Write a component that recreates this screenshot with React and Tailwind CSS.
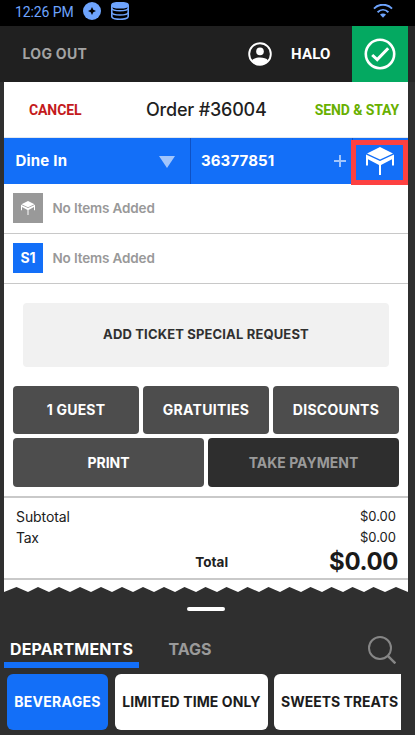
const TableIcon = ({className}) => (
  <svg className={className} viewBox="0 0 28 28" fill="none">
    <path d="M14 0 L27 6.4 L14 12.4 L1 6.4 Z" fill="currentColor" />
    <path d="M0 7.4 L14 14 L28 7.4 V18.6 H26 V12.2 L15 18 V28 H13 V18 L2 12.2 V18.6 H0 Z" fill="currentColor" />
  </svg>
)

const StatusBar = () => (
  <div className="h-[26px] bg-black flex items-start justify-between pl-[15px] pr-[22px] text-[#6ea4fd]">
    <div className="flex items-center h-[23px]">
      <span className="w-[68px] font-['Roboto',sans-serif] text-sm leading-none tracking-[-0.1px] whitespace-nowrap">12:26 PM</span>
      <svg className="w-[18px] h-[18px] -mt-px" viewBox="0 0 18 18">
        <circle cx="9" cy="9" r="9" fill="currentColor" />
        <path d="M9 5 L10.3 7.7 L13 9 L10.3 10.3 L9 13 L7.7 10.3 L5 9 L7.7 7.7 Z" fill="#000" />
      </svg>
      <svg className="w-[18px] h-[18px] ml-[10px] -mt-px" viewBox="0 0 18 18" fill="none" stroke="currentColor" strokeWidth="1.6">
        <ellipse cx="9" cy="3.2" rx="8.2" ry="2.6" fill="currentColor" />
        <path d="M0.8 3.2 V14.6 C0.8 18.2 17.2 18.2 17.2 14.6 V3.2" />
        <path d="M0.8 6.4 C1.6 9.6 16.4 9.6 17.2 6.4" />
        <path d="M0.8 10.6 C1.6 13.8 16.4 13.8 17.2 10.6" />
      </svg>
    </div>
    <svg className="w-[20px] h-[14px] mt-[4px]" viewBox="0 0 20 14" fill="none" stroke="currentColor" strokeWidth="1.9">
      <path d="M1 4.6 C6 -0.6 14 -0.6 19 4.6" />
      <path d="M4.6 8.2 C7.8 5.1 12.2 5.1 15.4 8.2" />
      <path d="M7 10.6 C8.6 9.2 11.4 9.2 13 10.6 L10 13.8 Z" fill="currentColor" stroke="none" />
    </svg>
  </div>
)

const Header = () => (
  <div className="h-[56px] flex items-center bg-[#202020]">
    <span className="pl-[22.5px] text-sm font-bold tracking-[0.3px] text-[#a3a3a3]">LOG OUT</span>
    <svg className="w-6 h-6 ml-auto text-white" viewBox="0 0 24 24">
      <circle cx="12" cy="12" r="10.8" fill="none" stroke="currentColor" strokeWidth="1.9" />
      <circle cx="12" cy="9.4" r="3.8" fill="currentColor" />
      <path d="M4 18.4 C6.4 14.6 17.6 14.6 20 18.4 C16.5 23.6 7.5 23.6 4 18.4 Z" fill="currentColor" />
    </svg>
    <span className="w-[61px] ml-[19px] mt-px font-['Roboto',sans-serif] text-[15px] font-bold tracking-[0.2px] text-white">HALO</span>
    <div className="w-[56px] h-full bg-[#04a961] flex items-center justify-center">
      <svg className="w-8 h-8 text-white" viewBox="0 0 32 32" fill="none" stroke="currentColor">
        <circle cx="16" cy="16" r="14.2" strokeWidth="2.6" />
        <path d="M8.2 17 L13.2 21.6 L24.2 10.2" strokeWidth="3" />
      </svg>
    </div>
    <div className="w-[7px] h-full bg-[#262626]" />
  </div>
)

const ItemRow = ({tile, tileClass}) => (
  <div className="h-[50px] border-b border-[#c8c8c8] flex items-center pl-[9px]">
    <div className={`w-[30px] h-[30px] -mt-px flex items-center justify-center text-white text-sm font-bold ${tileClass}`}>{tile}</div>
    <span className="pl-[9.5px] text-[13.5px] font-semibold tracking-[-0.15px] text-[#999]">No Items Added</span>
  </div>
)

const Action = ({className, children}) => (
  <button className={`rounded text-sm font-bold whitespace-nowrap ${className}`}>{children}</button>
)

const Totals = () => (
  <div className="h-[84px] border-y-2 border-[#c9c9c9] px-3 pt-2 text-[#202020]">
    <div className="h-[21px] flex items-center justify-between">
      <span className="text-sm tracking-[-0.1px]">Subtotal</span>
      <span className="text-[13px]">$0.00</span>
    </div>
    <div className="h-[21px] flex items-center justify-between">
      <span className="text-sm tracking-[-0.3px]">Tax</span>
      <span className="text-[13px]">$0.00</span>
    </div>
    <div className="h-[29px] flex items-center justify-end -mr-[2px]">
      <span className="text-[13.5px] font-bold mr-[101px]">Total</span>
      <span className="text-[24px] font-bold tracking-[-0.4px] leading-none -mt-px text-[#1a1a1a]">$0.00</span>
    </div>
  </div>
)

const TornEdge = () => (
  <svg className="block w-full h-[12px]" viewBox="0 0 404 12">
    <rect width="404" height="12" fill="#2f2f2f" />
    <path
      d="M0 0 H404 V12 L392 7 L381 12 L369.5 7 L360 12 L348.5 7 L339 12 L327.5 7 L318 12 L306.5 7 L297 12 L285.5 7 L276 12 L264.5 7 L255 12 L243.5 7 L234 12 L222.5 7 L213 12 L201.5 7 L192 12 L180.5 7 L171 12 L160 7 L150 12 L139 7 L129 12 L118 7 L108 12 L97 7 L87 12 L76 7 L66 12 L55 7 L45 12 L34 7 L24 12 L12.5 7 L0 12 Z"
      fill="#fff"
    />
  </svg>
)

const App = () => {
  return (
    <div className="w-[415px] h-[735px] overflow-hidden bg-[#2f2f2f] font-['Inter','Liberation_Sans',sans-serif]">
      <StatusBar />
      <Header />
      <div className="w-[404px] ml-1 bg-white">
        <div className="h-[56px] border-b border-[#e3e8ee] flex items-center pl-[25px] pr-[9px]">
          <span className="w-[117px] mt-px font-['Roboto',sans-serif] text-sm font-bold tracking-[-0.1px] text-[#c41a1c]">CANCEL</span>
          <span className="text-[18px] font-medium tracking-[-0.2px] text-[#1f1f1f]">Order #36004</span>
          <span className="ml-auto mt-px font-['Roboto',sans-serif] text-sm font-bold tracking-[-0.1px] text-[#68b000]">SEND &amp; STAY</span>
        </div>
        <div className="h-[46px] bg-[#136ff8] flex items-center text-white text-[15px] font-bold">
          <div className="w-[187px] h-full flex items-center justify-between pl-[11.5px] pr-[15px] border-r border-[#0f51c4]">
            <span className="tracking-[0.2px]">Dine In</span>
            <svg className="w-[16px] h-[12px] mt-[2px]" viewBox="0 0 16 12">
              <path d="M0 0 H16 L8 12 Z" fill="#a1c5fc" />
            </svg>
          </div>
          <div className="w-[161px] h-full flex items-center justify-between pl-[10px] pr-[6px]">
            <span className="tracking-[0.1px]">36377851</span>
            <svg className="w-[12px] h-[12px]" viewBox="0 0 12 12">
              <path d="M6 0 V12 M0 6 H12" stroke="#a1c5fc" strokeWidth="2" />
            </svg>
          </div>
          <div className="relative w-[56px] h-full border-l border-[#0f51c4]">
            <div className="absolute -left-[2px] top-[2px] w-[57px] h-[45px] border-5 border-[#fd4141] bg-[#136ff8] flex items-center justify-center">
              <TableIcon className="w-7 h-7 mt-[-3px]" />
            </div>
          </div>
        </div>
        <ItemRow tile={<TableIcon className="w-[14px] h-[14px]" />} tileClass="bg-[#999]" />
        <ItemRow tile="S1" tileClass="bg-[#136ff8]" />
        <div className="h-[212px] pt-[19px]">
          <button className="block ml-[19px] w-[366px] h-[64px] rounded bg-[#f1f1f1] text-[13px] font-bold tracking-[0.15px] text-[#303030]">
            ADD TICKET SPECIAL REQUEST
          </button>
          <div className="grid grid-cols-3 gap-1 mt-[19px] px-[9px]">
            <Action className="h-[48px] bg-[#4d4d4d] text-white tracking-[0.2px]">1 GUEST</Action>
            <Action className="h-[48px] bg-[#4d4d4d] text-white tracking-[0.3px]">GRATUITIES</Action>
            <Action className="h-[48px] bg-[#4d4d4d] text-white tracking-[0.3px]">DISCOUNTS</Action>
          </div>
          <div className="grid grid-cols-2 gap-1 mt-1 px-[9px]">
            <Action className="h-[49px] bg-[#4d4d4d] text-white">PRINT</Action>
            <Action className="h-[49px] bg-[#2e2e2e] text-[#9a9a9a]">TAKE PAYMENT</Action>
          </div>
        </div>
        <Totals />
        <TornEdge />
      </div>
      <div className="w-[38px] h-1 mt-[15px] ml-[187px] rounded-full bg-white" />
      <div className="flex items-end h-[57px] pl-1">
        <div className="w-[135px] h-[31px] border-b-6 border-[#136ff8] pl-[6px] text-base font-bold tracking-[0.15px] leading-6 text-white">DEPARTMENTS</div>
        <div className="h-[31px] pl-[29.5px] text-base font-bold leading-6 text-[#9a9a9a]">TAGS</div>
        <svg className="w-[28px] h-[28px] ml-auto mr-[19px] mb-[4px]" viewBox="0 0 28 28" fill="none" stroke="#868686" strokeWidth="2">
          <circle cx="12" cy="12" r="11" />
          <path d="M19.8 19.8 L27.4 27.4" strokeWidth="2.4" />
        </svg>
      </div>
      <div className="flex w-[401px] mt-[6px] pl-[7px] overflow-hidden text-sm font-bold text-[#1c1c1c]">
        <div className="w-[101px] h-[56px] shrink-0 rounded-md bg-[#136ff8] text-white tracking-[0.3px] flex items-center justify-center">BEVERAGES</div>
        <div className="w-[153px] h-[56px] ml-[7px] shrink-0 rounded-md bg-white tracking-[0.1px] flex items-center justify-center">LIMITED TIME ONLY</div>
        <div className="w-[127px] h-[56px] ml-[6px] shrink-0 rounded-l-md bg-white flex items-center pl-[7px]">SWEETS TREATS</div>
      </div>
    </div>
  )
}

export default App
